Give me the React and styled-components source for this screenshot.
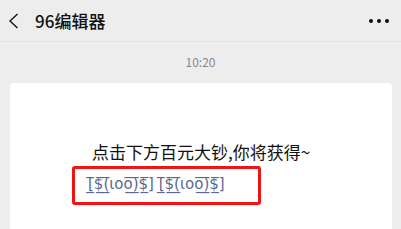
import styled, { createGlobalStyle } from "styled-components";

const Global = createGlobalStyle`
  html, body {
    margin: 0;
    padding: 0;
    background: #ededed;
    font-family: "Noto Sans CJK SC", "Noto Sans", sans-serif;
  }
`;

const Page = styled.div`
  width: 401px;
  height: 229px;
  overflow: hidden;
  background: #ededed;
  display: flex;
  flex-direction: column;
`;

const Header = styled.div`
  height: 42px;
  flex-shrink: 0;
  display: flex;
  align-items: center;
  padding: 0 12px 0 8px;
  border-bottom: 1px solid #e2e2e2;
  box-sizing: border-box;
`;

const Back = styled.svg`
  width: 11px;
  height: 16px;
  margin-top: 1px;
`;

const Title = styled.span`
  margin-left: 16px;
  font-size: 17px;
  font-weight: 500;
  color: #111;
  flex: 1;
`;

const Dots = styled.div`
  display: flex;
  gap: 4px;
  span {
    width: 4px;
    height: 4px;
    border-radius: 50%;
    background: #111;
  }
`;

const Time = styled.div`
  text-align: center;
  font-size: 12px;
  color: #8a8a8a;
  padding-top: 12px;
  height: 29px;
  line-height: 16px;
`;

const Card = styled.div`
  margin: 0 9px 0 10px;
  flex: 1;
  background: #fff;
  border-radius: 4px 4px 0 0;
  padding-top: 57px;
`;

const Lead = styled.p`
  margin: 0;
  text-align: center;
  font-size: 17px;
  line-height: 24px;
  color: #111;
`;

const Marked = styled.div`
  margin: 2px 0 0 62px;
  width: 189px;
  height: 39px;
  box-sizing: border-box;
  border: 3px solid #f01414;
  border-radius: 3px;
  padding: 1px 0 0 13px;
`;

const Money = styled.a`
  font-family: "DejaVu Sans", sans-serif;
  font-size: 15px;
  line-height: 20px;
  color: #5a6a8e;
  text-decoration: none;
  white-space: nowrap;
`;

const bill = "[̲̅$̲̅(̲̅ιοο̲̅)̲̅$̲̅]";

export default function App() {
  return (
    <Page>
      <Global />
      <Header>
        <Back viewBox="0 0 11 16">
          <path d="M9.5 1 L2 8 L9.5 15" fill="none" stroke="#111" strokeWidth="1.4" />
        </Back>
        <Title>96编辑器</Title>
        <Dots>
          <span />
          <span />
          <span />
        </Dots>
      </Header>
      <Time>10:20</Time>
      <Card>
        <Lead>点击下方百元大钞,你将获得~</Lead>
        <Marked>
          <Money>{bill} {bill}</Money>
        </Marked>
      </Card>
    </Page>
  );
}
